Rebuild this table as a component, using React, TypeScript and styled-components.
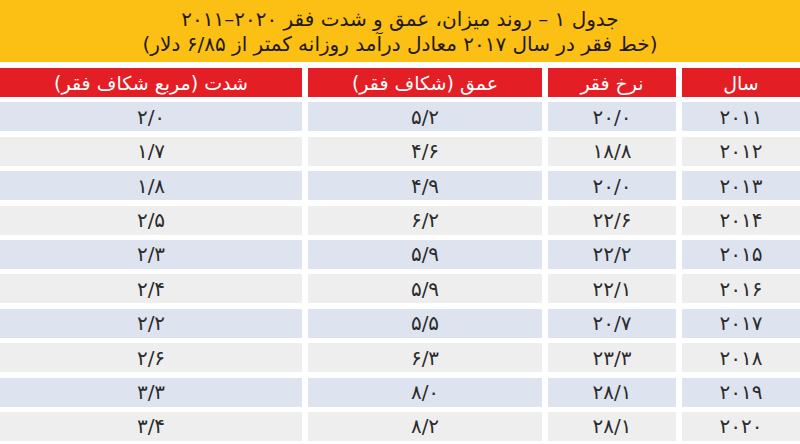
import React from 'react'
import styled, { createGlobalStyle } from 'styled-components'

const GlobalStyle = createGlobalStyle`
	html, body {
		margin:0;
		padding:0;
		background:#ffffff;
	}
	body {
		font-family:"DejaVu Sans", "Noto Sans", sans-serif;
	}
`

const Page = styled.div`
	width:800px;
	height:444px;
	overflow:hidden;
	direction:rtl;
	display:flex;
	flex-direction:column;
	gap:6px;
`

const TitleBand = styled.header`
	height:62px;
	background:#fcbf14;
	display:flex;
	flex-direction:column;
	align-items:center;
	justify-content:center;
	padding-top:2px;
	box-sizing:border-box;
	color:#1f1a17;
	font-size:20px;
	line-height:25px;
`

const TitleLine = styled.div`
	white-space:nowrap;
`

const Ltr = styled.span`
	direction:ltr;
	unicode-bidi:isolate;
	letter-spacing:1px;
`

const Grid = styled.div`
	display:grid;
	grid-template-columns:118px 128px 234px 1fr;
	grid-auto-rows:29px;
	column-gap:6px;
	row-gap:5.4px;
`

const Cell = styled.div<{ $tone: 'head' | 'blue' | 'gray' }>`
	display:flex;
	align-items:center;
	justify-content:center;
	font-size:${({ $tone }) => ($tone === 'head' ? '19px' : '20px')};
	letter-spacing:${({ $tone }) => ($tone === 'head' ? '0' : '2px')};
	color:${({ $tone }) => ($tone === 'head' ? '#ffffff' : '#2b2b2b')};
	background:${({ $tone }) =>
		$tone === 'head' ? '#e31e25' : $tone === 'blue' ? '#dde4ef' : '#eeeeee'};
	white-space:nowrap;
`

const headers = ['سال', 'نرخ فقر', 'عمق (شکاف فقر)', 'شدت (مربع شکاف فقر)']

const rows = [
	['۲۰۱۱', '۲۰/۰', '۵/۲', '۲/۰'],
	['۲۰۱۲', '۱۸/۸', '۴/۶', '۱/۷'],
	['۲۰۱۳', '۲۰/۰', '۴/۹', '۱/۸'],
	['۲۰۱۴', '۲۲/۶', '۶/۲', '۲/۵'],
	['۲۰۱۵', '۲۲/۲', '۵/۹', '۲/۳'],
	['۲۰۱۶', '۲۲/۱', '۵/۹', '۲/۴'],
	['۲۰۱۷', '۲۰/۷', '۵/۵', '۲/۲'],
	['۲۰۱۸', '۲۳/۳', '۶/۳', '۲/۶'],
	['۲۰۱۹', '۲۸/۱', '۸/۰', '۳/۳'],
	['۲۰۲۰', '۲۸/۱', '۸/۲', '۳/۴'],
]

export default function App() {
	return (
		<>
			<GlobalStyle />
			<Page>
				<TitleBand>
					<TitleLine>
						جدول ۱ – روند میزان، عمق و شدت فقر <Ltr>۲۰۱۱–۲۰۲۰</Ltr>
					</TitleLine>
					<TitleLine>(خط فقر در سال ۲۰۱۷ معادل درآمد روزانه کمتر از ۶/۸۵ دلار)</TitleLine>
				</TitleBand>
				<Grid>
					{headers.map((h) => (
						<Cell key={h} $tone="head">{h}</Cell>
					))}
					{rows.map((r, i) =>
						r.map((v, j) => (
							<Cell key={`${i}-${j}`} $tone={i % 2 === 0 ? 'blue' : 'gray'}>
								{v}
							</Cell>
						))
					)}
				</Grid>
			</Page>
		</>
	)
}
